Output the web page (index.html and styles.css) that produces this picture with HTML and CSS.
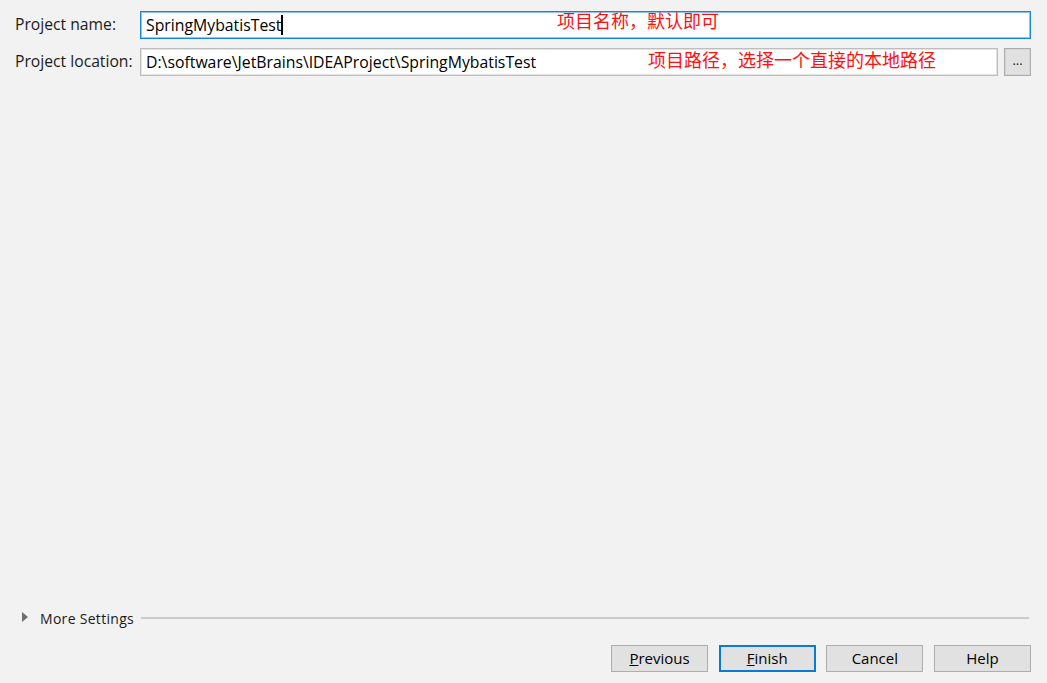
FILE: index.html
```html
<!DOCTYPE html>
<html>
<head>
<meta charset="utf-8">
<link rel="stylesheet" href="styles.css">
</head>
<body>
<div class="dialog">
  <div class="form">
    <label class="label">Project name:</label>
    <div class="field field-active span2">
      <span class="value">SpringMybatisTest</span><span class="caret"></span>
      <span class="note note-name">项目名称，默认即可</span>
    </div>
    <label class="label">Project location:</label>
    <div class="field">
      <span class="value">D:\software\JetBrains\IDEAProject\SpringMybatisTest</span>
      <span class="note note-loc">项目路径，选择一个直接的本地路径</span>
    </div>
    <div class="browse">...</div>
  </div>
  <div class="spacer"></div>
  <div class="more">
    <span class="tri"></span>
    <span class="more-text">More Settings</span>
    <span class="rule"></span>
  </div>
  <div class="buttons">
    <div class="btn"><u>P</u>revious</div>
    <div class="btn btn-default"><u>F</u>inish</div>
    <div class="btn">Cancel</div>
    <div class="btn">Help</div>
  </div>
</div>
</body>
</html>
```

FILE: styles.css
```css
html, body {
  margin: 0;
  padding: 0;
  background: #f2f2f2;
}
.dialog {
  width: 1047px;
  height: 683px;
  box-sizing: border-box;
  display: flex;
  flex-direction: column;
  font-family: "Open Sans", "Noto Sans", sans-serif;
  font-size: 14px;
  color: #1a1a1a;
  padding: 11px 16px 11px 15px;
}
.form {
  display: grid;
  grid-template-columns: 119px 1fr 27px;
  column-gap: 6px;
  row-gap: 9px;
  align-items: center;
}
.label {
  white-space: nowrap;
  font-size: 15.7px;
  margin-top: -2px;
}
.field {
  position: relative;
  height: 28px;
  box-sizing: border-box;
  background: #fff;
  border: 1px solid #bdbdbd;
  box-shadow: inset 0 0 0 1px #e3e3e3;
  display: flex;
  align-items: center;
  padding-left: 5px;
  font-size: 15.8px;
  color: #000;
}
.span2 { grid-column: 2 / 4; }
.field-active {
  border: 1px solid #1785dc;
  box-shadow: inset 0 0 0 1px #8ec4ef;
}
.caret {
  display: inline-block;
  width: 2px;
  height: 20px;
  background: #000;
  margin-left: 0;
}
.note {
  position: absolute;
  font-family: "Noto Sans CJK SC", sans-serif;
  font-size: 18px;
  color: #ff1010;
  line-height: 1;
  white-space: nowrap;
}
.note-name { left: 416px; top: -1px; }
.note-loc { left: 507px; top: 1px; }
.browse {
  height: 28px;
  box-sizing: border-box;
  background: #e1e1e1;
  border: 1px solid #adadad;
  box-shadow: inset 0 0 0 1px #d4d4d4;
  display: flex;
  align-items: center;
  justify-content: center;
  font-size: 13px;
  padding-bottom: 4px;
}
.spacer { flex: 1; }
.more {
  display: flex;
  align-items: center;
  height: 20px;
  padding-left: 7px;
  margin-bottom: 17px;
}
.tri {
  width: 0;
  height: 0;
  border-left: 6px solid #6e6e6e;
  border-top: 5px solid transparent;
  border-bottom: 5px solid transparent;
  margin-right: 12px;
  margin-top: -2px;
}
.more-text {
  font-size: 14px;
  letter-spacing: 0.3px;
  margin-right: 7px;
}
.rule {
  flex: 1;
  height: 2px;
  background: #cbcbcb;
  margin-top: 0;
  margin-right: 2px;
}
.buttons {
  display: flex;
  justify-content: flex-end;
  gap: 10.67px;
}
.btn {
  width: 97px;
  height: 27px;
  box-sizing: border-box;
  background: #e1e1e1;
  border: 1px solid #adadad;
  display: flex;
  align-items: center;
  justify-content: center;
  font-size: 15px;
  color: #000;
  padding-bottom: 1px;
}
.btn-default {
  border: 2px solid #0a7ad6;
}
```
